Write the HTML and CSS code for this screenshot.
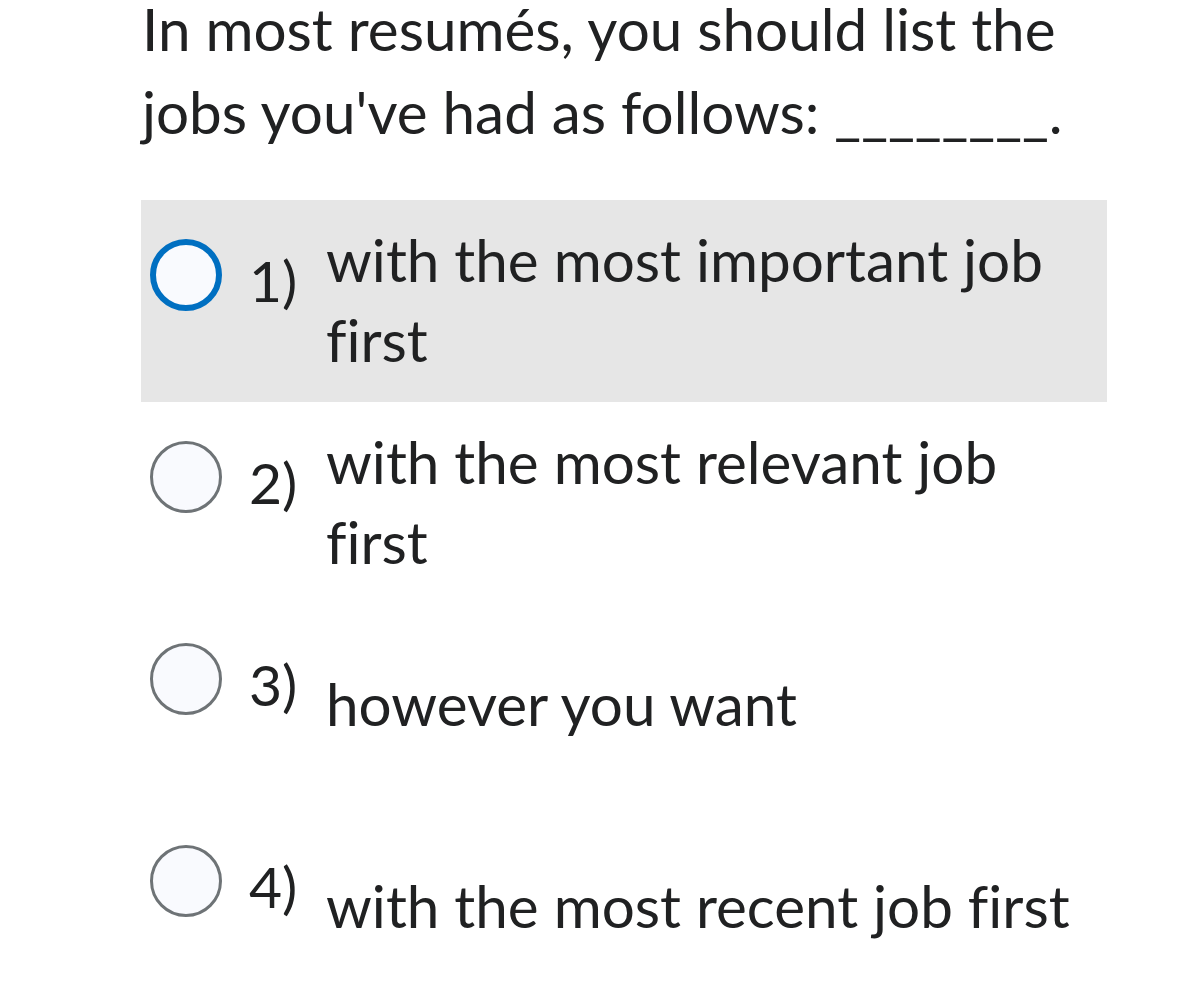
FILE: index.html
```html
<!DOCTYPE html>
<html lang="en">
<head>
<meta charset="utf-8">
<title>Question</title>
<link rel="stylesheet" href="styles.css">
</head>
<body>
<div class="quiz">
  <p class="question">In most resumés, you should list the jobs you've had as follows: ________.</p>
  <div class="options">
    <div class="option option-active">
      <span class="radio radio-focus"></span>
      <span class="num">1)</span>
      <span class="label">with the most important job first</span>
    </div>
    <div class="option">
      <span class="radio"></span>
      <span class="num">2)</span>
      <span class="label">with the most relevant job first</span>
    </div>
    <div class="option">
      <span class="radio"></span>
      <span class="num">3)</span>
      <span class="label">however you want</span>
    </div>
    <div class="option">
      <span class="radio"></span>
      <span class="num">4)</span>
      <span class="label">with the most recent job first</span>
    </div>
  </div>
</div>
</body>
</html>
```

FILE: styles.css
```css
html, body {
  margin: 0;
  padding: 0;
  background: #ffffff;
}
body {
  font-family: Lato, "Open Sans", sans-serif;
  color: #202122;
  overflow: hidden;
  font-variant-ligatures: none;
}
.quiz {
  margin-left: 141px;
  width: 966px;
}
.question {
  margin: -13px 0 0 1px;
  font-size: 58.4px;
  line-height: 83px;
  width: 950px;
}
.options {
  margin-top: 47px;
  display: flex;
  flex-direction: column;
}
.option {
  display: flex;
  align-items: center;
  height: 202px;
  box-sizing: border-box;
  padding-left: 9px;
}
.option-active {
  background: #e6e6e6;
}
.radio {
  align-self: flex-start;
  flex: none;
  width: 72px;
  height: 72px;
  margin-top: 39px;
  box-sizing: border-box;
  border-radius: 50%;
  border: 3px solid #6e7376;
  background: #f9fafe;
}
.radio-focus {
  border: 6px solid #006fc1;
}
.num {
  align-self: flex-start;
  flex: none;
  margin-top: 49px;
  margin-left: 27px;
  width: 77px;
  font-size: 57px;
  line-height: 62px;
}
.label {
  font-size: 58.4px;
  line-height: 80px;
  width: 765px;
  margin-top: -4px;
}
```
